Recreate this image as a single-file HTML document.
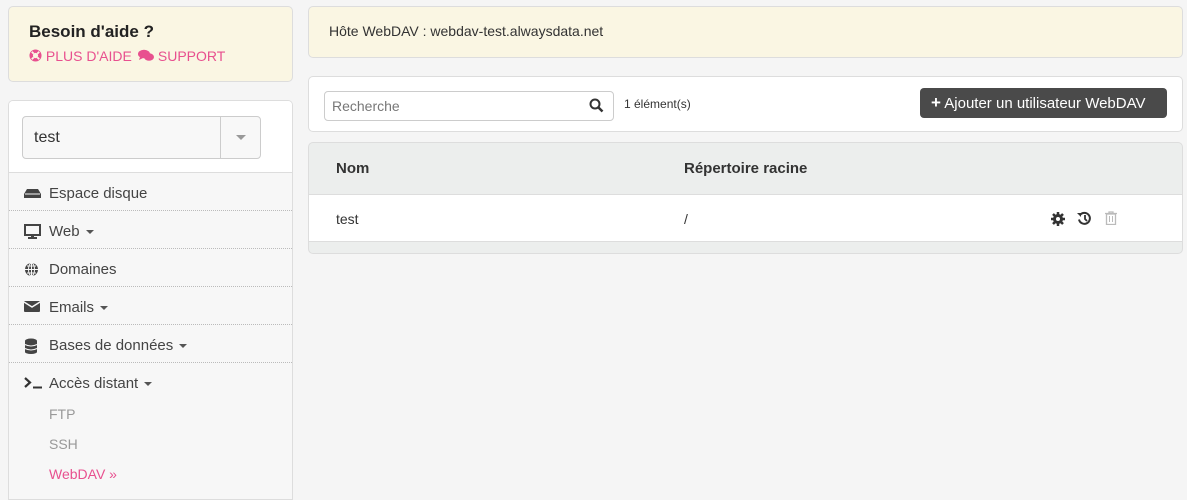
<!DOCTYPE html>
<html><head><meta charset="utf-8"><style>
*{box-sizing:border-box}
html,body{height:488px}
body{margin:0;width:1187px;height:488px;overflow:hidden;background:#f5f5f5;font-family:"Liberation Sans",sans-serif;color:#333;font-size:14px;position:relative}
.abs{position:absolute}
.help{left:8px;top:6px;width:285px;height:76px;background:#faf6e3;border:1px solid #ddd;border-radius:5px}
.help h3{margin:0;position:absolute;left:20px;top:15px;font-size:17px;font-weight:bold;color:#222}
.help .l{position:absolute;top:41px;color:#e8508f;font-size:14px}
.side{left:8px;top:100px;width:285px;height:400px;background:#f7f7f7;border:1px solid #ddd;border-radius:5px 5px 0 0;overflow:hidden}
.sidetop{height:72px;background:#fff;border-bottom:1px solid #ddd;position:relative}
.sel{position:absolute;left:13px;top:15px;width:239px;height:43px;border:1px solid #ccc;border-radius:4px;background:#f8f8f8}
.sel span{position:absolute;left:11px;top:12px;font-size:16px;color:#333}
.sel .d{position:absolute;left:197px;top:0;width:1px;height:41px;background:#ccc}
.sel .c{position:absolute;left:213px;top:18px;border:5px solid transparent;border-top:5px solid #999}
.item{height:38px;border-bottom:1px dotted #bbb;position:relative;font-size:15px;color:#444}
.item .t{position:absolute;left:40px;top:12px}
.item svg{position:absolute;left:15px;top:13px}
.caret{display:inline-block;border:4px solid transparent;border-top:4px solid #555;margin-left:6px;vertical-align:middle;margin-top:4px}
.sub{position:absolute;left:40px;font-size:14px;color:#999}
.host{left:308px;top:6px;width:875px;height:52px;background:#faf6e3;border:1px solid #ddd;border-radius:5px}
.tool{left:308px;top:76px;width:875px;height:56px;background:#fff;border:1px solid #ddd;border-radius:5px}
.search{position:absolute;left:15px;top:14px;width:290px;height:30px;border:1px solid #ccc;border-radius:4px;color:#777;padding:6px 7px;font-size:14px}
.btn{position:absolute;left:611px;top:11px;width:247px;height:30px;background:#4a4a4a;border-radius:4px;color:#fff;font-size:15px;line-height:30px;padding-left:11px}
.tbl{left:308px;top:142px;width:875px;height:112px;border:1px solid #ddd;border-radius:5px;overflow:hidden;background:#eceeed}
.th{height:52px;position:relative;font-weight:bold;font-size:15px;border-bottom:1px solid #ddd}
.tr{height:47px;background:#fff;position:relative;border-bottom:1px solid #ddd;font-size:14px}
</style></head><body>
<div class="abs help"><h3>Besoin d'aide ?</h3>
<span class="l" style="left:20px"><svg width="13" height="13" viewBox="0 0 14 14" style="vertical-align:-1px"><circle cx="7" cy="7" r="6.5" fill="#e8508f"/><circle cx="7" cy="7" r="2.8" fill="#faf6e3"/><path d="M3 3l2 2M11 3l-2 2M3 11l2-2M11 11l-2-2" stroke="#faf6e3" stroke-width="2"/></svg> PLUS D'AIDE</span>
<span class="l" style="left:129px"><svg width="16" height="13" viewBox="0 0 16 13" style="vertical-align:-1px"><ellipse cx="6" cy="5" rx="6" ry="4.3" fill="#e8508f"/><path d="M2 8l-1 3 4-2z" fill="#e8508f"/><ellipse cx="11" cy="8" rx="5" ry="3.7" fill="#e8508f"/></svg> SUPPORT</span></div>

<div class="abs side">
<div class="sidetop"><div class="sel"><span>test</span><div class="d"></div><div class="c"></div></div></div>
<div class="item"><svg width="17" height="14" viewBox="0 0 17 14"><path d="M3 3h11l3 5v4H0V8z" fill="#444"/><path d="M1 8h15" stroke="#f7f7f7"/></svg><span class="t">Espace disque</span></div>
<div class="item"><svg width="17" height="15" viewBox="0 0 17 15"><rect x="1" y="1" width="15" height="10" fill="none" stroke="#444" stroke-width="2"/><rect x="7" y="11" width="3" height="2" fill="#444"/><rect x="4" y="13" width="9" height="2" fill="#444"/></svg><span class="t">Web<span class="caret"></span></span></div>
<div class="item"><svg width="15" height="15" viewBox="0 0 15 15"><circle cx="7.5" cy="7.5" r="6.5" fill="#444"/><path d="M1 7.5h13M7.5 1v13M3 4h9M3 11h9" stroke="#f7f7f7" stroke-width="1"/><ellipse cx="7.5" cy="7.5" rx="3" ry="6.5" fill="none" stroke="#f7f7f7"/></svg><span class="t">Domaines</span></div>
<div class="item"><svg width="16" height="13" viewBox="0 0 16 13"><rect x="0" y="1" width="16" height="11" rx="1" fill="#444"/><path d="M0 2l8 5 8-5" stroke="#f7f7f7" stroke-width="1.5" fill="none"/></svg><span class="t">Emails<span class="caret"></span></span></div>
<div class="item"><svg width="14" height="16" viewBox="0 0 14 16"><ellipse cx="7" cy="3" rx="6" ry="2.5" fill="#444"/><rect x="1" y="3" width="12" height="11" fill="#444"/><ellipse cx="7" cy="14" rx="6" ry="2" fill="#444"/><path d="M1 6.5q6 3 12 0M1 10.5q6 3 12 0" stroke="#f7f7f7" fill="none"/></svg><span class="t">Bases de données<span class="caret"></span></span></div>
<div style="position:relative;height:150px">
<svg width="20" height="12" viewBox="0 0 20 12" style="position:absolute;left:15px;top:14px"><path d="M1 1l5 4.5-5 4.5" stroke="#333" stroke-width="2.2" fill="none"/><path d="M9 10.5h9" stroke="#333" stroke-width="2"/></svg>
<span style="position:absolute;left:40px;top:12px;font-size:15px;color:#444">Accès distant<span class="caret"></span></span>
<span class="sub" style="top:43px">FTP</span><span class="sub" style="top:73px">SSH</span><span class="sub" style="top:103px;color:#e8508f">WebDAV »</span>
</div></div>

<div class="abs host"><span style="position:absolute;left:20px;top:16px;font-size:14px;color:#333">Hôte WebDAV : webdav-test.alwaysdata.net</span></div>
<div class="abs tool"><div class="search">Recherche
<svg width="15" height="15" viewBox="0 0 15 15" style="position:absolute;right:9px;top:6px"><circle cx="6" cy="6" r="4.5" stroke="#333" stroke-width="2" fill="none"/><path d="M9.5 9.5l4 4" stroke="#333" stroke-width="2.5"/></svg></div>
<span style="position:absolute;left:315px;top:20px;font-size:12px">1 élément(s)</span>
<div class="btn"><b style="font-size:17px">+</b> Ajouter un utilisateur WebDAV</div></div>

<div class="abs tbl"><div class="th"><span style="position:absolute;left:27px;top:17px">Nom</span><span style="position:absolute;left:375px;top:17px">Répertoire racine</span></div>
<div class="tr"><span style="position:absolute;left:27px;top:16px">test</span><span style="position:absolute;left:375px;top:16px">/</span>
<svg width="14" height="14" viewBox="0 0 14 14" style="position:absolute;left:742px;top:17px"><circle cx="7" cy="7" r="5" fill="#333"/><path d="M7 0v14M0 7h14M2 2l10 10M12 2L2 12" stroke="#333" stroke-width="2.5"/><circle cx="7" cy="7" r="2" fill="#fff"/></svg>
<svg width="15" height="15" viewBox="0 0 15 15" style="position:absolute;left:768px;top:16px"><path d="M3 4A5.5 5.5 0 1 1 2 8.5" stroke="#333" stroke-width="2" fill="none"/><path d="M0 2l4 0 0 4z" fill="#333"/><path d="M8 4v4l2 2" stroke="#333" stroke-width="1.8" fill="none"/></svg>
<svg width="12" height="14" viewBox="0 0 12 14" style="position:absolute;left:796px;top:16px"><path d="M0 2.5h12M4 2.5V1h4v1.5" stroke="#bbb" stroke-width="1.3" fill="none"/><rect x="1.5" y="3" width="9" height="10.5" fill="none" stroke="#bbb" stroke-width="1.3"/><path d="M4.5 5v6M7.5 5v6" stroke="#bbb"/></svg>
</div></div>
</body></html>
